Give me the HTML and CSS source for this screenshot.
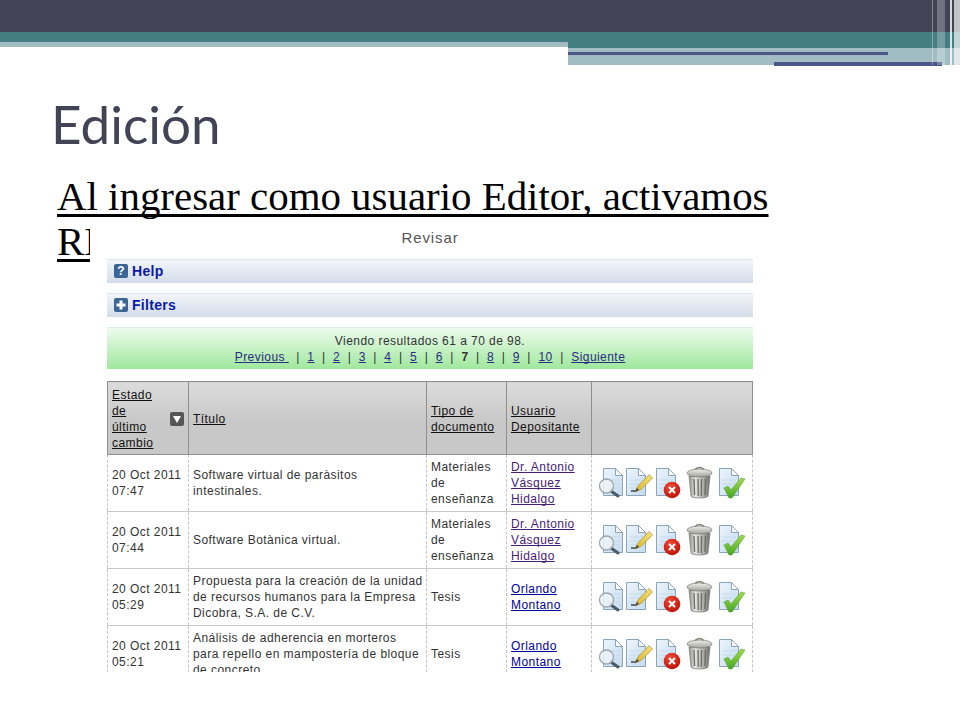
FILE: index.html
```html
<!DOCTYPE html>
<html lang="es">
<head>
<meta charset="utf-8">
<title>Edición</title>
<link rel="stylesheet" href="styles.css">
</head>
<body>
<svg class="defs" width="0" height="0" aria-hidden="true">
  <defs>
    <linearGradient id="paper" x1="0" y1="0" x2="1" y2="1"><stop offset="0" stop-color="#edf5fb"/><stop offset="1" stop-color="#c4dbf0"/></linearGradient>
    <linearGradient id="can" x1="0" y1="0" x2="1" y2="0"><stop offset="0" stop-color="#8f8f8a"/><stop offset=".3" stop-color="#e4e4e0"/><stop offset=".6" stop-color="#bdbdb8"/><stop offset="1" stop-color="#6f6f6a"/></linearGradient>
    <linearGradient id="lid" x1="0" y1="0" x2="0" y2="1"><stop offset="0" stop-color="#f0f0ec"/><stop offset="1" stop-color="#a2a29c"/></linearGradient>
    <radialGradient id="red" cx=".4" cy=".3" r=".8"><stop offset="0" stop-color="#f04a35"/><stop offset="1" stop-color="#b50d05"/></radialGradient>
    <linearGradient id="green" x1="0" y1="0" x2="0" y2="1"><stop offset="0" stop-color="#a4dc4c"/><stop offset="1" stop-color="#46a824"/></linearGradient>
    <linearGradient id="pencil" x1="0" y1="1" x2="1" y2="0"><stop offset="0" stop-color="#d9b52f"/><stop offset="1" stop-color="#f4e27a"/></linearGradient>
    <symbol id="doc" viewBox="0 0 20 28">
      <path d="M.5.5H12.500L19.500 7.500V27.500H.5Z" fill="url(#paper)" stroke="#8aa4bd"/>
      <path d="M12.500.5V7.500H19.500Z" fill="#fff" stroke="#8aa4bd"/>
      <path d="M3 12H17M3 16H17M3 20H17" stroke="#c6daea"/>
    </symbol>
    <symbol id="actions" viewBox="0 0 150 34">
      <use href="#doc" x="6" y="2" width="20" height="28"/>
      <path d="M14 25l7 5" stroke="#4c5a66" stroke-width="3" stroke-linecap="round"/>
      <circle cx="9.500" cy="20" r="7" fill="#eef4f7" fill-opacity=".8" stroke="#9aa6b0" stroke-width="1.300"/>
      <use href="#doc" x="29" y="2" width="20" height="28"/>
      <path d="M34 25h5" stroke="#5b6f86" stroke-width="2"/>
      <path d="M38 26 41 20 52 8.500 55.500 12 44 23.500Z" fill="url(#pencil)" stroke="#a8892a" stroke-width=".7"/>
      <path d="M38 26 40 22 42 24Z" fill="#444"/>
      <use href="#doc" x="59" y="2" width="20" height="28"/>
      <circle cx="75" cy="24" r="8.300" fill="url(#red)"/>
      <path d="M72 21l6 6M78 21l-6 6" stroke="#fff" stroke-width="2"/>
      <path d="M92 10h21L111 30a8.500 2 0 0 1-17 0Z" fill="url(#can)" stroke="#777772" stroke-width=".7"/>
      <path d="M97 13l.6 16M101 13l.3 17M104.500 13l-.3 17M108.500 13l-.6 16" stroke="#6c6c66" stroke-width="1.300"/>
      <ellipse cx="102.500" cy="7" rx="12.500" ry="4" fill="url(#lid)" stroke="#77776f" stroke-width=".7"/>
      <path d="M98 3.500q4.500-4 9 0" fill="none" stroke="#85857d" stroke-width="1.500"/>
      <use href="#doc" x="122" y="2" width="20" height="28"/>
      <path d="M127 22l4-2 3 4 10-12 4 1-13 19h-3Z" fill="url(#green)" stroke="#4d9a27" stroke-width=".5"/>
    </symbol>
  </defs>
</svg>
<header class="banner">
  <div class="dark"></div>
  <div class="bands">
    <div class="band-left"><div class="teal"></div><div class="pale"></div></div>
    <div class="band-right">
      <div class="teal-tall"></div>
      <div class="pale-tall"><div class="rule-a"></div><div class="rule-b"></div></div>
    </div>
  </div>
  <div class="stripes"><i class="s1"></i><i class="s2"></i><i class="s3"></i><i class="s4"></i><i class="s5"></i><i class="s6"></i><i class="s7"></i></div>
</header>
<main class="slide">
  <h1>Edición</h1>
  <p class="lead">Al ingresar como usuario Editor, activamos REVISAR</p>
</main>
<section class="shot">
  <h2>Revisar</h2>
  <div class="bar">
    <svg class="bar-ico" viewBox="0 0 14 14"><rect width="14" height="14" rx="2" fill="#3a6596"/><text x="7" y="11" class="q">?</text></svg>
    <span>Help</span>
  </div>
  <div class="bar">
    <svg class="bar-ico" viewBox="0 0 14 14"><rect width="14" height="14" rx="2" fill="#3a6596"/><path d="M7 2.500v9M2.500 7h9" stroke="#fff" stroke-width="3"/></svg>
    <span>Filters</span>
  </div>
  <div class="pager">
    <div>Viendo resultados 61 a 70 de 98.</div>
    <div><a href="#">Previous&nbsp;</a> <span class="sep">|</span> <a href="#">1</a> <span class="sep">|</span> <a href="#">2</a> <span class="sep">|</span> <a href="#">3</a> <span class="sep">|</span> <a href="#">4</a> <span class="sep">|</span> <a href="#">5</a> <span class="sep">|</span> <a href="#">6</a> <span class="sep">|</span> <b>7</b> <span class="sep">|</span> <a href="#">8</a> <span class="sep">|</span> <a href="#">9</a> <span class="sep">|</span> <a href="#">10</a> <span class="sep">|</span> <a href="#">Siguiente</a></div>
  </div>
  <table>
    <colgroup><col class="c1"><col class="c2"><col class="c3"><col class="c4"><col class="c5"></colgroup>
    <thead>
      <tr>
        <th><div class="sort"><a href="#">Estado<br>de<br>último<br>cambio</a><svg class="sort-ico" viewBox="0 0 14 14"><rect width="14" height="14" rx="2" fill="#555"/><path d="M3 4h8L7 11Z" fill="#fff"/></svg></div></th>
        <th><a href="#">Título</a></th>
        <th><a href="#">Tipo de documento</a></th>
        <th><a href="#">Usuario Depositante</a></th>
        <th></th>
      </tr>
    </thead>
    <tbody>
      <tr>
        <td>20 Oct 2011 07:47</td>
        <td class="title">Software virtual de paràsitos intestinales.</td>
        <td>Materiales de enseñanza</td>
        <td><a class="seen" href="#">Dr. Antonio Vásquez Hidalgo</a></td>
        <td class="act-cell"><svg class="acts" viewBox="0 0 150 34"><use href="#actions"/></svg></td>
      </tr>
      <tr>
        <td>20 Oct 2011 07:44</td>
        <td class="title">Software Botànica virtual.</td>
        <td>Materiales de enseñanza</td>
        <td><a class="seen" href="#">Dr. Antonio Vásquez Hidalgo</a></td>
        <td class="act-cell"><svg class="acts" viewBox="0 0 150 34"><use href="#actions"/></svg></td>
      </tr>
      <tr>
        <td>20 Oct 2011 05:29</td>
        <td class="title">Propuesta para la creación de la unidad de recursos humanos para la Empresa Dicobra, S.A. de C.V.</td>
        <td>Tesis</td>
        <td><a href="#">Orlando Montano</a></td>
        <td class="act-cell"><svg class="acts" viewBox="0 0 150 34"><use href="#actions"/></svg></td>
      </tr>
      <tr>
        <td>20 Oct 2011 05:21</td>
        <td class="title">Análisis de adherencia en morteros para repello en mampostería de bloque de concreto</td>
        <td>Tesis</td>
        <td><a href="#">Orlando Montano</a></td>
        <td class="act-cell"><svg class="acts" viewBox="0 0 150 34"><use href="#actions"/></svg></td>
      </tr>
    </tbody>
  </table>
</section>
</body>
</html>
```
FILE: styles.css
```css
* { box-sizing: border-box; }
html, body { margin: 0; height: 720px; overflow: hidden; background: #fff; }
body { position: relative; font-family: "Liberation Sans", Arial, sans-serif; text-decoration-skip-ink: none; }
.defs { position: absolute; }

.banner { position: relative; height: 66px; }
.dark { height: 32px; background: #424456; }
.bands { display: flex; }
.band-left { width: 568px; }
.band-right { flex: 1; }
.teal { height: 10px; background: #437e83; }
.pale { height: 5px; background: #a1bcc2; }
.teal-tall { height: 16px; background: #437e83; }
.pale-tall { position: relative; height: 17px; background: #a1bcc2; }
.rule-a { position: absolute; left: 0; top: 4px; width: 320px; height: 3px; background: #4d5688; }
.rule-b { position: absolute; left: 206px; top: 14px; width: 168px; height: 4px; background: #4d5688; }
.stripes { position: absolute; top: 0; right: 0; width: 28px; height: 65px; display: flex; }
.stripes i { display: block; height: 100%; }
.s1 { width: 1px; background: rgba(255,255,255,.35); }
.s2 { width: 4px; }
.s3 { width: 8px; background: rgba(255,255,255,.25); }
.s4 { width: 5px; }
.s5 { width: 2px; background: rgba(255,255,255,.8); }
.s6 { width: 2px; }
.s7 { width: 6px; background: rgba(255,255,255,.68); }

.slide { padding: 23px 0 0 51px; }
h1 { margin: 0; font: 400 53px/70px Lato, sans-serif; color: #424456; }
.lead { margin: 15px 0 0 6px; width: 760px; font: 40.9px/45px "Liberation Serif", serif; color: #000; text-decoration: underline; text-decoration-thickness: 3px; text-underline-offset: 4px; }

.shot { position: absolute; left: 90px; top: 226px; width: 680px; height: 446px; padding-left: 17px; overflow: hidden; background: #fff; color: #333; font-size: 12px; letter-spacing: .45px; }
h2 { margin: 0; width: 646px; height: 33px; font: 400 15px/24px "Liberation Sans", sans-serif; letter-spacing: .9px; color: #555; text-align: center; }
.bar { display: flex; align-items: center; gap: 4px; width: 646px; height: 24px; margin-bottom: 10px; padding: 0 0 2px 7px; background: linear-gradient(#f3f6fa, #d3dce8); border-top: 1px solid #dde3ea; font-size: 14px; font-weight: 700; letter-spacing: .3px; color: #0a1aa8; }
.bar-ico { width: 14px; height: 14px; }
.q { font: 700 12px "Liberation Sans", sans-serif; fill: #fff; text-anchor: middle; }
.pager { width: 646px; height: 42px; margin-bottom: 12px; padding-top: 5px; background: linear-gradient(#eefbee, #9fe89d); border-top: 1px solid #dcefdc; text-align: center; line-height: 16px; }
.sep { margin: 0 3.7px; }
a { color: #00009c; }
.pager a { color: #2b2b80; }
a.seen { color: #47207a; }

table { width: 645px; table-layout: fixed; border-collapse: collapse; }
.c1 { width: 81px; } .c2 { width: 238px; } .c3 { width: 80px; } .c4 { width: 85px; } .c5 { width: 161px; }
th { height: 73px; padding: 1px 4px 0; border: 1px solid #8f8f8f; background: linear-gradient(#dcdcdc, #c8c8c8 55%); font-weight: 400; text-align: left; line-height: 16px; }
th a { color: #111; }
td { height: 57px; padding: 0 4px; border-left: 1px dashed #c4c4c4; border-right: 1px dashed #c4c4c4; border-bottom: 1px solid #c8c8c8; line-height: 16px; vertical-align: middle; }
td.title { padding-right: 1px; }
.sort { display: flex; align-items: center; justify-content: space-between; }
.sort a { display: block; }
.sort-ico { width: 14px; height: 14px; flex: none; }
.act-cell { padding: 0 0 0 5px; }
.acts { display: block; width: 150px; height: 34px; }
```
